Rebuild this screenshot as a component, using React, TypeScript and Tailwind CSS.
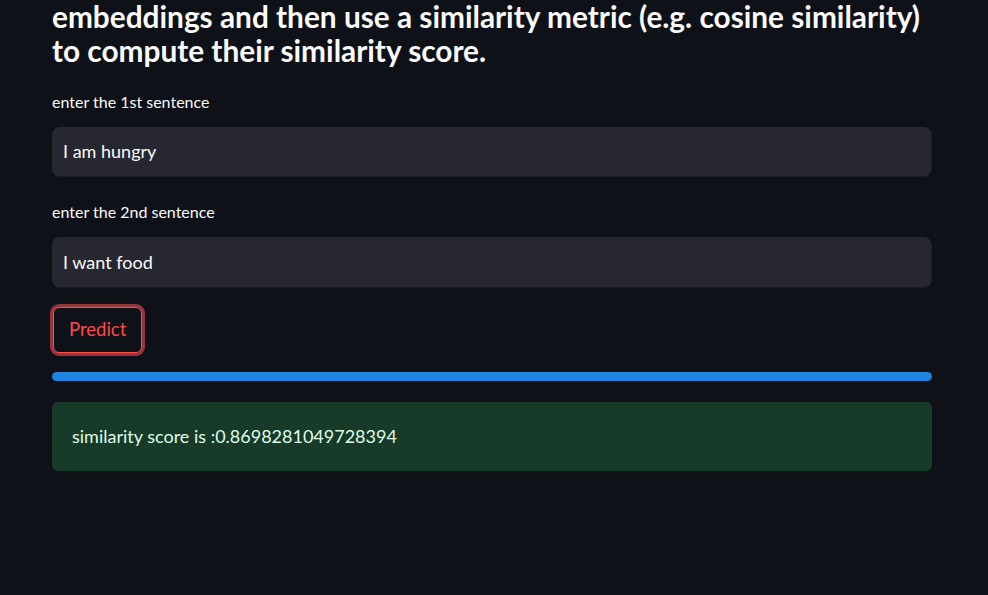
export default function App() {
  return (
    <div className="w-[988px] h-[595px] overflow-hidden bg-[#0e1117] text-[#fafafa]" style={{ fontFamily: "Lato, 'Noto Sans', sans-serif" }}>
      <div className="w-[880px] ml-[52px] flex flex-col">
        <h3 className="text-[29.8px] leading-[34px] font-bold w-[880px]">
          embeddings and then use a similarity metric (e.g. cosine similarity) to compute their similarity score.
        </h3>
        <div className="mt-[24px] text-[16px] leading-[20px] h-[20px]">enter the 1st sentence</div>
        <div className="mt-[15px] h-[50px] rounded-[8px] bg-[#262730] border-b border-r border-[#1c1d24] flex items-center px-[11px] text-[18px]">I am hungry</div>
        <div className="mt-[25px] text-[16px] leading-[20px] h-[20px]">enter the 2nd sentence</div>
        <div className="mt-[15px] h-[51px] rounded-[8px] bg-[#262730] border-b border-r border-[#1c1d24] flex items-center px-[11px] text-[18px]">I want food</div>
        <div className="mt-[16px] flex">
          <div className="ml-[-2px] rounded-[9px] p-[3px] bg-[#93353a]">
            <div className="h-[46px] px-[15px] rounded-[6px] border border-[#ff4b4b] bg-[#0e1117] text-[#ff4b4b] flex items-center text-[18.5px]">Predict</div>
          </div>
        </div>
        <div className="mt-[16px] h-[9px] rounded-full bg-[#1f84e0]"></div>
        <div className="mt-[21px] h-[69px] rounded-[6px] bg-[#173a29] text-[#dffde9] flex items-center px-[20px] text-[18px]">
          similarity score is :0.8698281049728394
        </div>
      </div>
    </div>
  );
}
